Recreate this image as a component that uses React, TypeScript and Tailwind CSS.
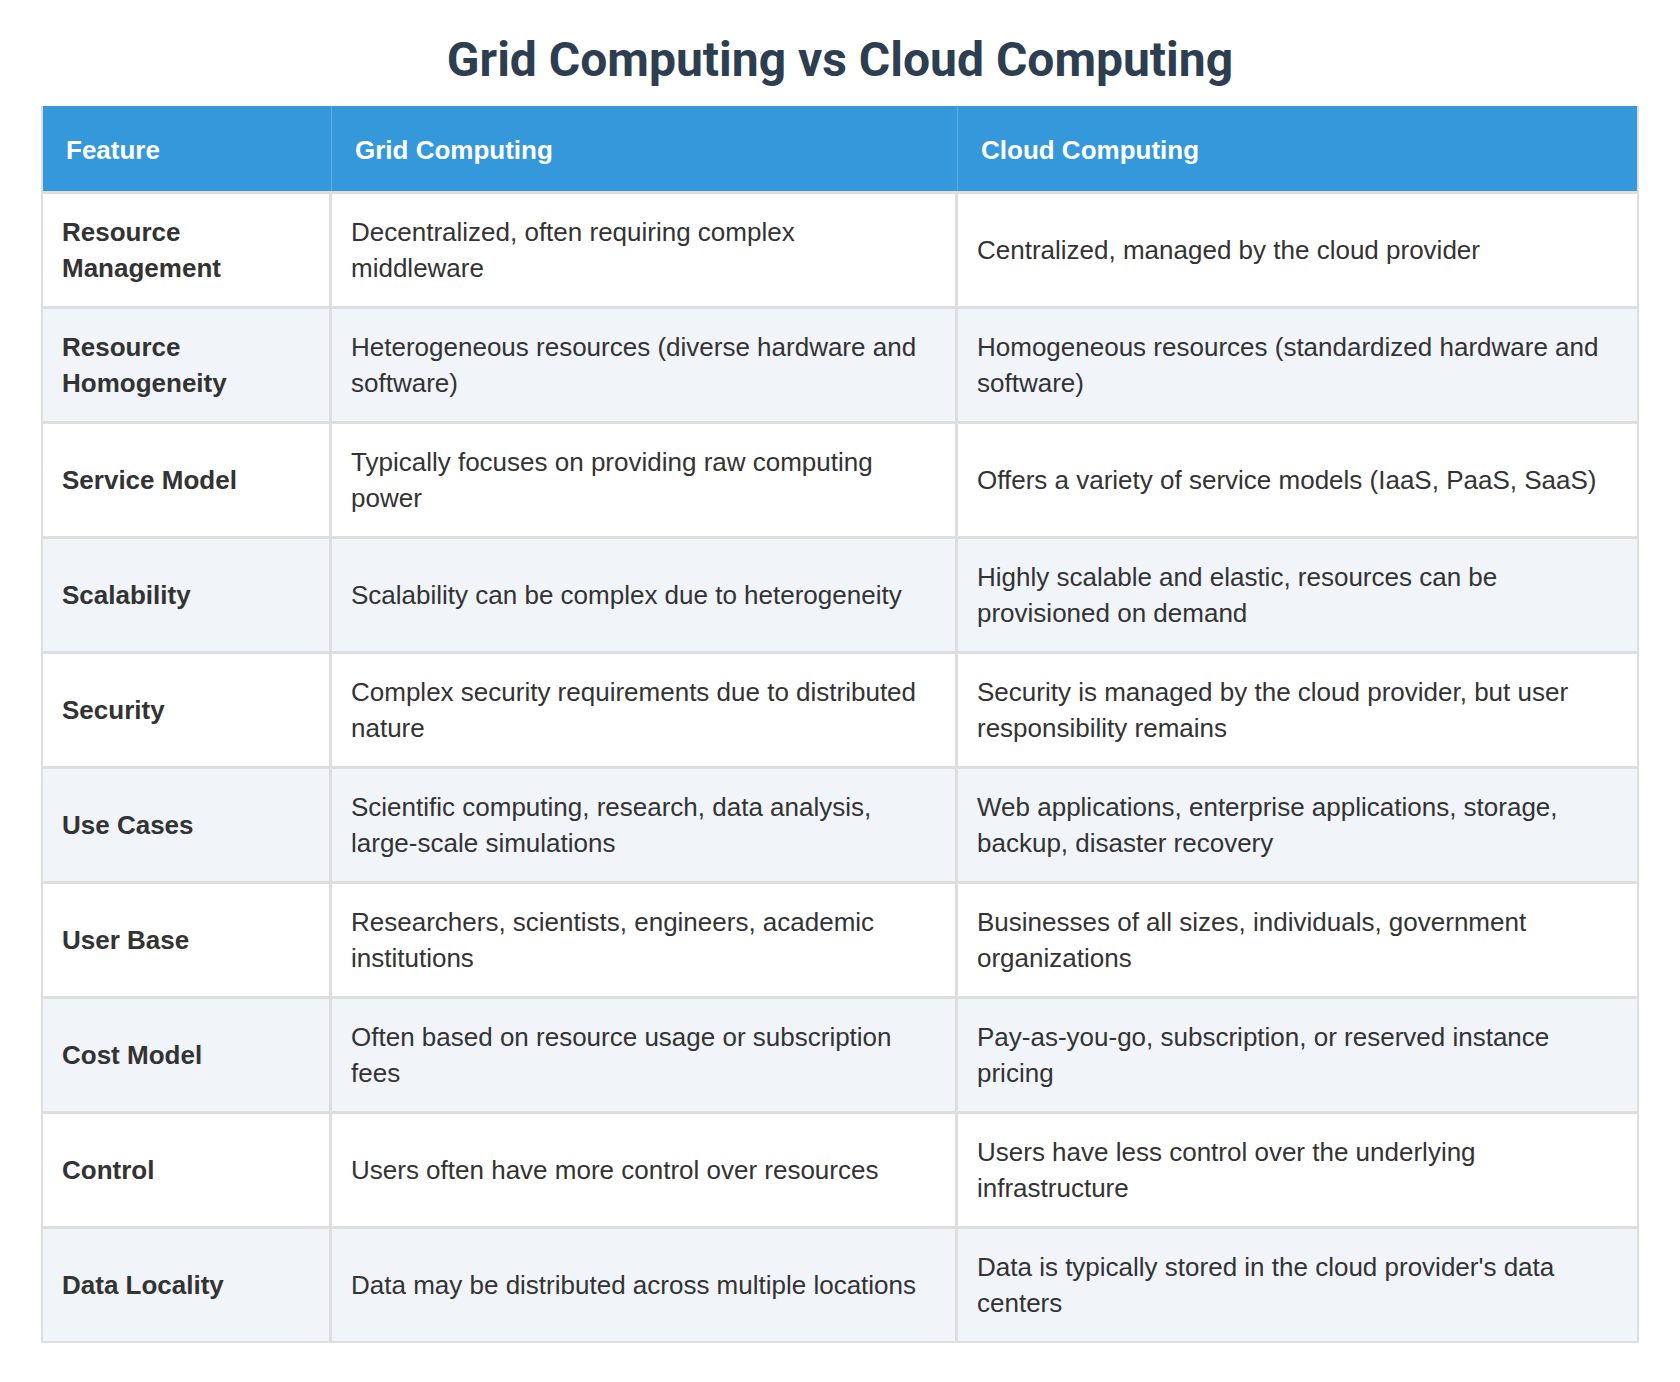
const rows: [string, string, string][] = [
  ['Resource Management', 'Decentralized, often requiring complex middleware', 'Centralized, managed by the cloud provider'],
  ['Resource Homogeneity', 'Heterogeneous resources (diverse hardware and software)', 'Homogeneous resources (standardized hardware and software)'],
  ['Service Model', 'Typically focuses on providing raw computing power', 'Offers a variety of service models (IaaS, PaaS, SaaS)'],
  ['Scalability', 'Scalability can be complex due to heterogeneity', 'Highly scalable and elastic, resources can be provisioned on demand'],
  ['Security', 'Complex security requirements due to distributed nature', 'Security is managed by the cloud provider, but user responsibility remains'],
  ['Use Cases', 'Scientific computing, research, data analysis, large-scale simulations', 'Web applications, enterprise applications, storage, backup, disaster recovery'],
  ['User Base', 'Researchers, scientists, engineers, academic institutions', 'Businesses of all sizes, individuals, government organizations'],
  ['Cost Model', 'Often based on resource usage or subscription fees', 'Pay-as-you-go, subscription, or reserved instance pricing'],
  ['Control', 'Users often have more control over resources', 'Users have less control over the underlying infrastructure'],
  ['Data Locality', 'Data may be distributed across multiple locations', "Data is typically stored in the cloud provider's data centers"],
];

export default function App() {
  return (
    <div className="min-h-[1382px] bg-white px-[41px] pt-[32px] pb-[42px] font-['Liberation_Sans',Arial,sans-serif]">
      <h1 className="mb-[18px] text-center font-['Roboto',sans-serif] text-[48px] font-bold leading-[56px] text-[#2c3e50]">
        Grid Computing vs Cloud Computing
      </h1>

      <table className="w-full table-fixed border-separate border-spacing-0 border-2 border-t-0 border-[#dedede] text-[26px]">
        <colgroup>
          <col className="w-[289px]" />
          <col className="w-[626px]" />
          <col />
        </colgroup>
        <thead>
          <tr className="bg-[#3498db] text-left text-white">
            <th className="border-r border-[#5dade2] px-[23px] pt-[26px] pb-[22px] font-bold leading-[37px]">Feature</th>
            <th className="border-r border-[#5dade2] px-[23px] pt-[26px] pb-[22px] font-bold leading-[37px]">Grid Computing</th>
            <th className="px-[23px] pt-[26px] pb-[22px] font-bold leading-[37px]">Cloud Computing</th>
          </tr>
        </thead>
        <tbody>
          {rows.map(([feature, grid, cloud], i) => (
            <tr key={feature} className={i % 2 === 1 ? 'bg-[#f1f4f9]' : 'bg-white'}>
              <td className="border-t-[3px] border-r-[3px] border-[#dedede] pl-[19px] pr-[19px] py-[20px] align-middle font-bold leading-[36px] text-[#333333]">
                {feature}
              </td>
              <td className="border-t-[3px] border-r-[3px] border-[#dedede] pl-[19px] pr-[28px] py-[20px] align-middle leading-[36px] text-[#333333]">
                {grid}
              </td>
              <td className="border-t-[3px] border-[#dedede] pl-[19px] pr-[19px] py-[20px] align-middle leading-[36px] text-[#333333]">
                {cloud}
              </td>
            </tr>
          ))}
        </tbody>
      </table>
    </div>
  );
}
